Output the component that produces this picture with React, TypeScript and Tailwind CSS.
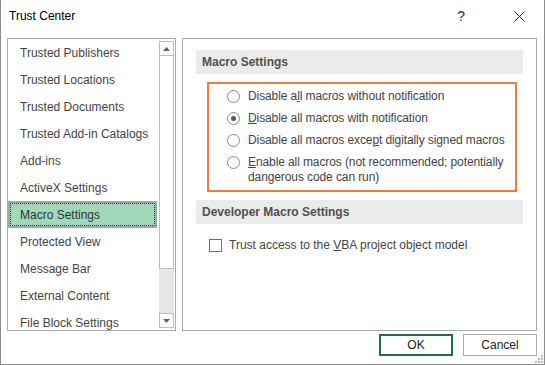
import React from 'react';

const categories = [
  'Trusted Publishers',
  'Trusted Locations',
  'Trusted Documents',
  'Trusted Add-in Catalogs',
  'Add-ins',
  'ActiveX Settings',
  'Macro Settings',
  'Protected View',
  'Message Bar',
  'External Content',
  'File Block Settings',
];

const Arrow = ({ up }: { up?: boolean }) => (
  <svg width="7" height="4" viewBox="0 0 7 4" className={up ? '' : 'rotate-180'}>
    <path d="M0 4 L3.5 0 L7 4 Z" fill="#606060" />
  </svg>
);

const Radio = ({ checked }: { checked?: boolean }) => (
  <span className="mt-[1px] flex h-[13px] w-[13px] shrink-0 items-center justify-center rounded-full border border-[#8c8c8c] bg-white">
    {checked && <span className="h-[5px] w-[5px] rounded-full bg-[#555]" />}
  </span>
);

export default function App() {
  return (
    <div className="relative flex h-[365px] w-[545px] flex-col border-x border-b border-[#8c8c8c] bg-white font-['Segoe_UI','Liberation_Sans',sans-serif] text-[12px] text-[#444]">
      {/* title bar */}
      <div className="flex h-[32px] shrink-0 items-center pl-[8px] text-black">
        <span className="flex-1">Trust Center</span>
        <span className="mr-[49px] text-[14px] text-[#333]">?</span>
        <svg width="11" height="11" viewBox="0 0 11 11" className="mr-[19px]">
          <path d="M0.5 0.5 L10.5 10.5 M10.5 0.5 L0.5 10.5" stroke="#222" strokeWidth="1" />
        </svg>
      </div>

      <div className="flex gap-[6px] pl-[6px] pr-[7px] pt-[6px]">
        {/* category list */}
        <div className="flex h-[293px] w-[169px] border border-[#ababab]">
          <div className="flex-1 overflow-hidden">
            {categories.map((c) =>
              c === 'Macro Settings' ? (
                <div key={c} className="mr-[2px] h-[27px] border-2 border-[#a6a6a6] bg-[#a0d9ba]">
                  <div className="flex h-full items-center border border-dotted border-[#333] pl-[9px] text-[#333]">{c}</div>
                </div>
              ) : (
                <div key={c} className="flex h-[27px] items-center pl-[12px]">
                  {c}
                </div>
              )
            )}
          </div>
          <div className="my-[2px] mr-[1px] flex w-[15px] flex-col">
            <div className="flex h-[15px] items-center justify-center border border-[#bdbdbd]">
              <Arrow up />
            </div>
            <div className="h-[213px] border-x border-b border-[#bdbdbd] bg-white" />
            <div className="flex-1 bg-[#e6e6e6]" />
            <div className="flex h-[15px] items-center justify-center border border-[#bdbdbd]">
              <Arrow />
            </div>
          </div>
        </div>

        {/* settings panel */}
        <div className="h-[293px] flex-1 border border-[#ababab] px-[13px] pt-[11px]">
          <div className="flex h-[24px] items-center bg-[#ebebeb] pl-[6px] font-bold text-[#505050]">Macro Settings</div>

          <div className="ml-[11px] mr-[6px] mt-[8px] flex flex-col gap-[7px] whitespace-nowrap border-2 border-[#f07c3c] pt-[5px] pb-[5px] pl-[18px] leading-[15px] tracking-[-0.1px]">
            <div className="flex gap-[8px]">
              <Radio />
              <span>
                Disable a<u>l</u>l macros without notification
              </span>
            </div>
            <div className="flex gap-[8px]">
              <Radio checked />
              <span>
                <u>D</u>isable all macros with notification
              </span>
            </div>
            <div className="flex gap-[8px]">
              <Radio />
              <span>
                Disable all macros exce<u>p</u>t digitally signed macros
              </span>
            </div>
            <div className="flex gap-[8px]">
              <Radio />
              <span>
                <u>E</u>nable all macros (not recommended; potentially
                <br />
                dangerous code can run)
              </span>
            </div>
          </div>

          <div className="mt-[8px] flex h-[24px] items-center bg-[#ebebeb] pl-[6px] font-bold text-[#505050]">
            Developer Macro Settings
          </div>

          <div className="mt-[12px] ml-[13px] flex items-center gap-[7px]">
            <span className="h-[13px] w-[13px] border border-[#707070] bg-white" />
            <span>
              Trust access to the <u>V</u>BA project object model
            </span>
          </div>
        </div>
      </div>

      {/* buttons */}
      <div className="mt-[3px] flex justify-end gap-[10px] pr-[7px] text-[#222]">
        <button className="flex h-[22px] w-[74px] items-center justify-center border-2 border-[#1f7145] bg-white">OK</button>
        <button className="flex h-[22px] w-[74px] items-center justify-center border border-[#adadad] bg-white">Cancel</button>
      </div>

      {/* resize grip */}
      <svg width="8" height="8" viewBox="0 0 8 8" className="absolute bottom-[1px] right-[1px]">
        <rect x="6" y="0" width="2" height="2" fill="#b8b8b8" />
        <rect x="3" y="3" width="2" height="2" fill="#b8b8b8" />
        <rect x="6" y="3" width="2" height="2" fill="#b8b8b8" />
        <rect x="0" y="6" width="2" height="2" fill="#b8b8b8" />
        <rect x="3" y="6" width="2" height="2" fill="#b8b8b8" />
        <rect x="6" y="6" width="2" height="2" fill="#b8b8b8" />
      </svg>
    </div>
  );
}
